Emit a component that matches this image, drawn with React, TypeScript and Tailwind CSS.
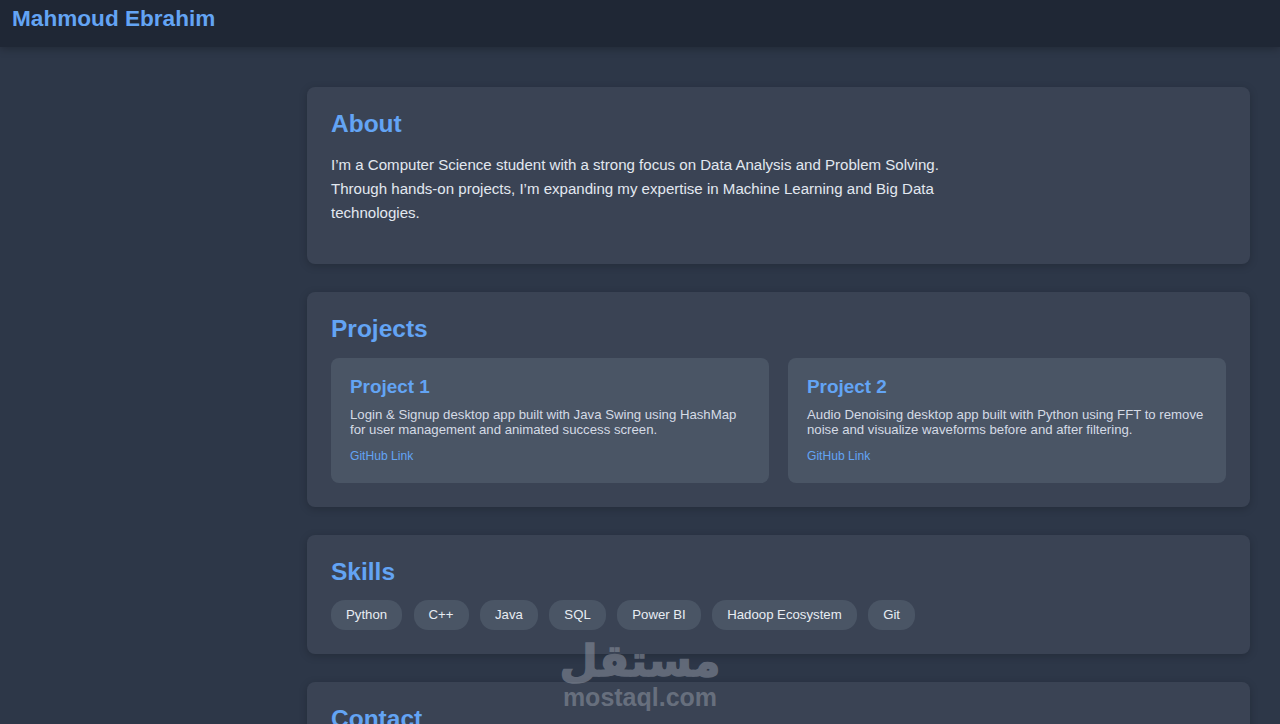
const font = { fontFamily: '"Liberation Sans", Arial, sans-serif' };

const skills = ["Python", "C++", "Java", "SQL", "Power BI", "Hadoop Ecosystem", "Git"];

const projects = [
  {
    title: "Project 1",
    lines: ["Login & Signup desktop app built with Java Swing using HashMap", "for user management and animated success screen."],
  },
  {
    title: "Project 2",
    lines: ["Audio Denoising desktop app built with Python using FFT to remove", "noise and visualize waveforms before and after filtering."],
  },
];

function Card({ title, children, className = "" }: { title: string; children?: React.ReactNode; className?: string }) {
  return (
    <section className={`rounded-lg bg-[#3a4354] p-6 shadow-[0_2px_8px_rgba(0,0,0,0.2)] ${className}`}>
      <h2 className="text-[24.5px] font-bold leading-[26px] text-[#63a4f4]">{title}</h2>
      {children}
    </section>
  );
}

export default function App() {
  return (
    <div className="relative h-screen overflow-hidden bg-[#2d3748]" style={font}>
      <header className="h-[47px] bg-[#1f2735] px-3 shadow-[0_2px_8px_rgba(0,0,0,0.25)]">
        <h1 className="pt-[6px] text-[22.6px] font-bold leading-[25px] text-[#63a4f4]">Mahmoud Ebrahim</h1>
      </header>

      <main className="ml-[307px] mr-[30px] flex flex-col gap-7 pt-[40px]">
        <Card title="About" className="h-[177px]">
          <p className="mt-[16px] max-w-[640px] text-[15.07px] leading-[24px] text-[#e2e8f0]">
            I’m a Computer Science student with a strong focus on Data Analysis and Problem Solving.
            <br />
            Through hands-on projects, I’m expanding my expertise in Machine Learning and Big Data
            <br />
            technologies.
          </p>
        </Card>

        <Card title="Projects" className="h-[215px]">
          <div className="mt-4 grid grid-cols-2 gap-[19px]">
            {projects.map((p) => (
              <div key={p.title} className="h-[125px] rounded-lg bg-[#4a5565] px-[19px] pt-[18px]">
                <h3 className="text-[18.9px] font-bold leading-[21px] text-[#63a4f4]">{p.title}</h3>
                <p className="mt-[10px] text-[13.2px] leading-[15px] text-[#d5dbe5]">
                  {p.lines[0]}
                  <br />
                  {p.lines[1]}
                </p>
                <a className="mt-[12px] block text-[12.1px] leading-[14px] text-[#63a4f4]">GitHub Link</a>
              </div>
            ))}
          </div>
        </Card>

        <Card title="Skills" className="h-[119px]">
          <div className="mt-[15px] flex gap-[11.5px]">
            {skills.map((s) => (
              <span key={s} className="flex h-[30px] items-center rounded-[14px] bg-[#4a5565] px-[15px] text-[13.2px] text-[#e8edf3]">
                {s}
              </span>
            ))}
          </div>
        </Card>

        <Card title="Contact" />
      </main>

      {/* watermark */}
      <div className="pointer-events-none absolute left-[562px] top-[636px] flex w-[156px] flex-col items-center text-[#8d93a0] opacity-55">
        <span dir="rtl" lang="ar" className="text-[44px] font-bold leading-[49px] [-webkit-text-stroke:1.5px_#8d93a0]" style={{ fontFamily: '"DejaVu Sans", sans-serif' }}>
          مستقل
        </span>
        <span className="text-[25px] font-bold leading-[24px]">mostaql.com</span>
      </div>
    </div>
  );
}
